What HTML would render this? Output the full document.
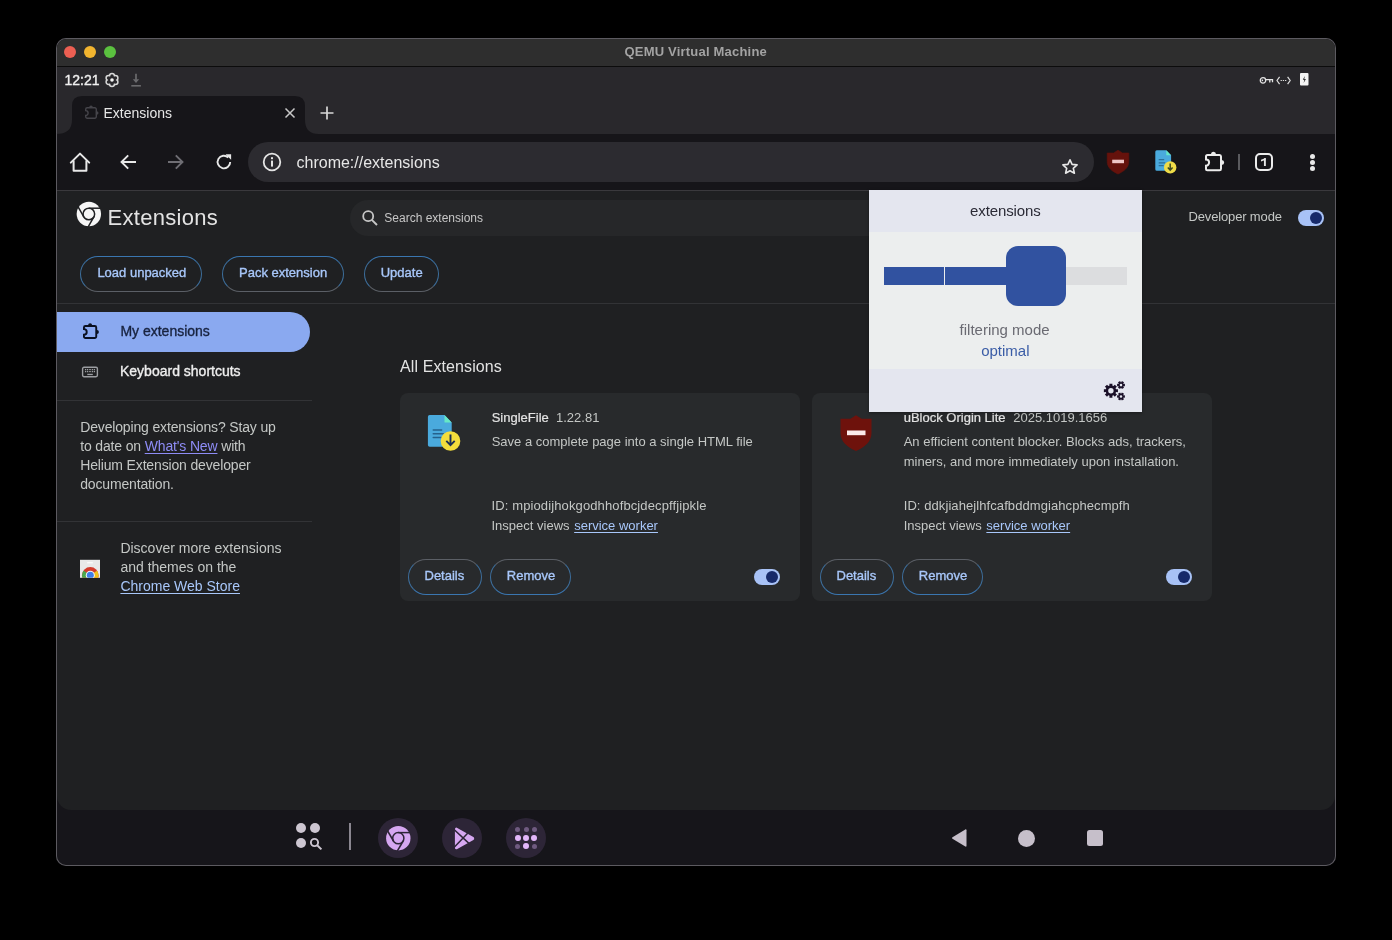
<!DOCTYPE html>
<html><head><meta charset="utf-8"><style>
html,body{margin:0;padding:0;background:#000;width:1392px;height:940px;overflow:hidden;font-family:"Liberation Sans", sans-serif;}
</style></head><body>
<div style="position:absolute;left:0;top:0;width:1392px;height:940px;will-change:transform;">
<div style="position:absolute;left:56px;top:38px;width:1280px;height:828px;background:#16151a;border-radius:10px;box-shadow:0 0 0 1px #5c5a60 inset;"></div>
<div style="position:absolute;left:57px;top:39px;width:1278px;height:27px;background:#2e2e2e;border-radius:9px 9px 0 0;"></div>
<div style="position:absolute;left:57px;top:66px;width:1278px;height:1px;background:#0c0c0c;"></div>
<div style="position:absolute;left:624.5px;top:44.70px;font-size:13px;line-height:13px;color:#a3a3a3;font-weight:700;white-space:nowrap;letter-spacing:0.2px;">QEMU Virtual Machine</div>
<div style="position:absolute;left:64px;top:46px;width:12px;height:12px;background:#ec5f52;border-radius:50%;"></div>
<div style="position:absolute;left:84px;top:46px;width:12px;height:12px;background:#f2b52f;border-radius:50%;"></div>
<div style="position:absolute;left:104px;top:46px;width:12px;height:12px;background:#5bc13f;border-radius:50%;"></div>
<div style="position:absolute;left:57px;top:67px;width:1278px;height:67px;background:#29282c;"></div>
<div style="position:absolute;left:64.5px;top:73.25px;font-size:14px;line-height:14px;color:#f0f0f0;font-weight:400;white-space:nowrap;-webkit-text-stroke:0.35px #f0f0f0;">12:21</div>
<svg style="position:absolute;left:104px;top:72px;" width="16" height="16" viewBox="0 0 16 16"><g stroke="#d8d8d8" stroke-width="3"><circle cx="8" cy="8" r="3.9" fill="#d8d8d8"/><circle cx="8.00" cy="4.00" r="1.7" fill="#d8d8d8"/><circle cx="4.54" cy="6.00" r="1.7" fill="#d8d8d8"/><circle cx="4.54" cy="10.00" r="1.7" fill="#d8d8d8"/><circle cx="8.00" cy="12.00" r="1.7" fill="#d8d8d8"/><circle cx="11.46" cy="10.00" r="1.7" fill="#d8d8d8"/><circle cx="11.46" cy="6.00" r="1.7" fill="#d8d8d8"/></g><circle cx="8" cy="8" r="3.9" fill="#29282c"/><circle cx="8.00" cy="4.00" r="1.7" fill="#29282c"/><circle cx="4.54" cy="6.00" r="1.7" fill="#29282c"/><circle cx="4.54" cy="10.00" r="1.7" fill="#29282c"/><circle cx="8.00" cy="12.00" r="1.7" fill="#29282c"/><circle cx="11.46" cy="10.00" r="1.7" fill="#29282c"/><circle cx="11.46" cy="6.00" r="1.7" fill="#29282c"/><circle cx="8" cy="8" r="1.8" fill="#f4f4f4"/></svg>
<svg style="position:absolute;left:130px;top:72px;" width="12" height="15" viewBox="0 0 12 15"><path d="M6 1.8v6" stroke="#6a6a6d" stroke-width="1.7"/><path d="M2.8 7.2h6.4L6 11z" fill="#6a6a6d"/><path d="M1.3 13.8h9.6" stroke="#6a6a6d" stroke-width="1.6"/></svg>
<svg style="position:absolute;left:1259px;top:76px;" width="15" height="9" viewBox="0 0 15 9"><g fill="none" stroke="#e4e4e4" stroke-width="1.3"><circle cx="4" cy="4.4" r="2.7"/><path d="M6.7 3.6h6.8v2.6M10.8 3.6v2.8"/></g><circle cx="3.4" cy="4.4" r="0.8" fill="#e4e4e4"/></svg>
<svg style="position:absolute;left:1276px;top:76px;" width="16" height="9" viewBox="0 0 16 9"><g fill="none" stroke="#dcdcdc" stroke-width="1.2"><path d="M3.6 0.8L1 4.5l2.6 3.7M11.6 0.8l2.6 3.7-2.6 3.7"/></g><path d="M4.6 4.5h6" stroke="#dcdcdc" stroke-width="1" stroke-dasharray="1.3 0.9"/></svg>
<svg style="position:absolute;left:1300px;top:73px;" width="9" height="13" viewBox="0 0 9 13"><rect x="0" y="0" width="8.5" height="12.5" rx="1" fill="#f4f4f4"/><path d="M4.8 3L2.8 6.8h1.6L3.6 10l2.3-4H4.3z" fill="#222"/></svg>
<svg style="position:absolute;left:56px;top:96px" width="266" height="38" viewBox="0 0 266 38"><path d="M0 38 Q16 38 16 24 L16 10 Q16 0 26 0 L239 0 Q249 0 249 10 L249 24 Q249 38 263 38 Z" fill="#161519"/></svg>
<svg style="position:absolute;left:80.5px;top:103px;" width="20.0" height="20" viewBox="0 0 20.0 20"><path d="M6.20,4.70 H13.80 A1.5,1.5 0 0 1 15.30,6.20 V13.80 A1.5,1.5 0 0 1 13.80,15.30 H6.20 A1.5,1.5 0 0 1 4.70,13.80 V12.40 A2.40,2.40 0 0 0 4.70,7.60 V6.20 A1.5,1.5 0 0 1 6.20,4.70Z" fill="none" stroke="#45444a" stroke-width="1.4"/><path d="M8.20,5.10 L8.20,4.30 A1.80,1.80 0 0 1 11.80,4.30 L11.80,5.10Z" fill="#45444a"/><path d="M14.90,8.20 L15.70,8.20 A1.80,1.80 0 0 1 15.70,11.80 L14.90,11.80Z" fill="#45444a"/></svg>
<div style="position:absolute;left:103.5px;top:106.45px;font-size:14px;line-height:14px;color:#e6e6e6;font-weight:400;white-space:nowrap;">Extensions</div>
<svg style="position:absolute;left:284px;top:107px;" width="12" height="12" viewBox="0 0 12 12"><path d="M1.5 1.5l9 9M10.5 1.5l-9 9" stroke="#c8c8c8" stroke-width="1.5"/></svg>
<svg style="position:absolute;left:320px;top:106px;" width="14" height="14" viewBox="0 0 14 14"><path d="M7 0.5v13M0.5 7h13" stroke="#d8d8d8" stroke-width="1.7"/></svg>
<div style="position:absolute;left:57px;top:134px;width:1278px;height:56px;background:#161519;"></div>
<div style="position:absolute;left:57px;top:190px;width:1278px;height:1px;background:#3a393d;"></div>
<svg style="position:absolute;left:68px;top:150px;" width="24" height="24" viewBox="0 0 24 24"><path d="M2.8 12.6L12 3.6l9.2 9" fill="none" stroke="#e8e8e8" stroke-width="2" stroke-linejoin="round" stroke-linecap="round"/><path d="M5.6 10.6V20.7H18.4V10.6" fill="none" stroke="#e8e8e8" stroke-width="2" stroke-linejoin="round"/></svg>
<svg style="position:absolute;left:119px;top:153px;" width="18" height="18" viewBox="0 0 18 18"><path d="M17 9H2.5M9.2 2.3L2.5 9l6.7 6.7" fill="none" stroke="#e8e8e8" stroke-width="1.9"/></svg>
<svg style="position:absolute;left:167px;top:153px;" width="18" height="18" viewBox="0 0 18 18"><path d="M1 9h14.5M8.8 2.3L15.5 9l-6.7 6.7" fill="none" stroke="#6f6e74" stroke-width="1.9"/></svg>
<svg style="position:absolute;left:214px;top:152px;" width="20" height="20" viewBox="0 0 20 20"><path d="M16.2 10a6.3 6.3 0 1 1-1.9-4.5" fill="none" stroke="#e8e8e8" stroke-width="1.9"/><path d="M11.5 2.2h5.6v5.6z" fill="#e8e8e8"/></svg>
<div style="position:absolute;left:248px;top:142px;width:846px;height:40px;background:#2c2b30;border-radius:20px;"></div>
<svg style="position:absolute;left:262px;top:152px;" width="20" height="20" viewBox="0 0 20 20"><circle cx="10" cy="10" r="8.3" fill="none" stroke="#e4e4e4" stroke-width="1.8"/><rect x="9" y="8.6" width="2" height="6" fill="#e4e4e4"/><rect x="9" y="5.2" width="2" height="2" fill="#e4e4e4"/></svg>
<div style="position:absolute;left:296.5px;top:154.96px;font-size:16px;line-height:16px;color:#e6e6e6;font-weight:400;white-space:nowrap;">chrome://extensions</div>
<svg style="position:absolute;left:1061px;top:158px;" width="18" height="18" viewBox="0 0 18 18"><path d="M9 1.8l2.1 4.6 5 .5-3.8 3.4 1.1 4.9L9 12.7l-4.4 2.5 1.1-4.9L1.9 6.9l5-.5z" fill="none" stroke="#e8e8e8" stroke-width="1.6" stroke-linejoin="round"/></svg>
<svg style="position:absolute;left:1106px;top:149px;" width="24" height="26" viewBox="0 0 24 26"><path d="M12 1.2L16.5 4H22.8v8.5c0 6.2-4.8 9.8-10.8 12.5C6 22.3 1.2 18.7 1.2 12.5V4H7.5z" fill="#65120c" stroke="#65120c" stroke-width="0.6" stroke-linejoin="round"/><rect x="6.2" y="10.7" width="11.8" height="3.5" fill="#efc6c6"/></svg>
<svg style="position:absolute;left:1154px;top:149px;" width="26" height="26" viewBox="0 0 26 26"><path d="M2.8 1.2h9.5l4.8 5V20.3a1.5 1.5 0 0 1-1.5 1.5H2.8a1.5 1.5 0 0 1-1.5-1.5V2.7a1.5 1.5 0 0 1 1.5-1.5z" fill="#4aaadd"/><path d="M12.3 1.2v5h4.8z" fill="#66e8c6"/><g stroke="#2d6f9a" stroke-width="1.2"><path d="M4.7 10.7h5.5M4.7 13.8h6.5M4.7 16.6h5"/></g><circle cx="16.2" cy="18.4" r="6.2" fill="#efdc48"/><path d="M16.2 14.6v6.5M13.8 18.6l2.4 2.6 2.4-2.6" fill="none" stroke="#3c4a22" stroke-width="1.5"/></svg>
<svg style="position:absolute;left:1201px;top:149.8px;" width="25" height="25.19999999999999" viewBox="0 0 25 25.19999999999999"><path d="M6.50,5.00 H18.50 A1.5,1.5 0 0 1 20.00,6.50 V18.70 A1.5,1.5 0 0 1 18.50,20.20 H6.50 A1.5,1.5 0 0 1 5.00,18.70 V15.70 A3.10,3.10 0 0 0 5.00,9.50 V6.50 A1.5,1.5 0 0 1 6.50,5.00Z" fill="none" stroke="#ececec" stroke-width="2"/><path d="M10.00,5.10 L10.00,4.30 A2.50,2.50 0 0 1 15.00,4.30 L15.00,5.10Z" fill="#ececec"/><path d="M19.90,10.10 L20.70,10.10 A2.50,2.50 0 0 1 20.70,15.10 L19.90,15.10Z" fill="#ececec"/></svg>
<div style="position:absolute;left:1238px;top:154px;width:2px;height:16px;background:#5a5a5e;"></div>
<div style="position:absolute;left:1255px;top:153px;width:18px;height:18px;border:2px solid #ececec;border-radius:5px;box-sizing:border-box;"></div>
<svg style="position:absolute;left:1257px;top:154px;" width="14" height="16" viewBox="0 0 14 16"><path d="M7.9 4.2V12" stroke="#e6e6e6" stroke-width="1.9"/><path d="M8.8 3.9L4 5.8v1.6l4.2-1.5z" fill="#e6e6e6"/></svg>
<div style="position:absolute;left:1309.5px;top:153.5px;width:5px;height:5px;background:#e8e8e8;border-radius:50%;"></div>
<div style="position:absolute;left:1309.5px;top:159.5px;width:5px;height:5px;background:#e8e8e8;border-radius:50%;"></div>
<div style="position:absolute;left:1309.5px;top:165.5px;width:5px;height:5px;background:#e8e8e8;border-radius:50%;"></div>
<div style="position:absolute;left:57px;top:191px;width:1278px;height:619px;background:#1f2022;border-radius:0 0 14px 14px;"></div>
<div style="position:absolute;left:57px;top:303px;width:1278px;height:1px;background:#323336;"></div>
<svg style="position:absolute;left:76px;top:201px;" width="26" height="26" viewBox="0 0 26 26"><circle cx="12.85" cy="13" r="12.2" fill="#f6f6f6"/><circle cx="12.85" cy="13" r="5.8" fill="none" stroke="#1f2022" stroke-width="1.5"/><path d="M12.85,7.20L24.58,7.20" stroke="#1f2022" stroke-width="1.5"/><path d="M17.87,15.90L12.01,26.06" stroke="#1f2022" stroke-width="1.5"/><path d="M7.83,15.90L1.96,5.74" stroke="#1f2022" stroke-width="1.5"/></svg>
<div style="position:absolute;left:107.5px;top:206.78px;font-size:22px;line-height:22px;color:#e3e3e3;font-weight:400;white-space:nowrap;letter-spacing:0.3px;">Extensions</div>
<div style="position:absolute;left:350px;top:200px;width:760px;height:36px;background:#262729;border-radius:18px;"></div>
<svg style="position:absolute;left:361px;top:209px;" width="18" height="18" viewBox="0 0 18 18"><circle cx="7.2" cy="7.2" r="5" fill="none" stroke="#c7c7c7" stroke-width="1.8"/><path d="M10.8 10.8l5.2 5.2" stroke="#c7c7c7" stroke-width="1.9"/></svg>
<div style="position:absolute;left:384.3px;top:211.84px;font-size:12px;line-height:12px;color:#c7c7c7;font-weight:400;white-space:nowrap;">Search extensions</div>
<div style="position:absolute;left:1188.5px;top:210.10px;font-size:13px;line-height:13px;color:#c4c7c5;font-weight:400;white-space:nowrap;letter-spacing:-0.15px;">Developer mode</div>
<div style="position:absolute;left:1298px;top:210px;width:26px;height:16px;background:#a8c2f6;border-radius:8px;"></div>
<div style="position:absolute;left:1310px;top:212px;width:12px;height:12px;background:#172a6a;border-radius:50%;"></div>
<div style="position:absolute;left:80px;top:256px;width:122px;height:36px;border:1px solid #3d6e9c;border-top-color:#3a76b0;border-bottom-color:#5b5f66;border-radius:18px;box-sizing:border-box;"></div>
<div style="position:absolute;left:97.4px;top:266.20px;font-size:13px;line-height:13px;color:#a8c7fa;font-weight:400;white-space:nowrap;-webkit-text-stroke:0.35px #a8c7fa;">Load unpacked</div>
<div style="position:absolute;left:222px;top:256px;width:122px;height:36px;border:1px solid #3d6e9c;border-top-color:#3a76b0;border-bottom-color:#5b5f66;border-radius:18px;box-sizing:border-box;"></div>
<div style="position:absolute;left:239px;top:266.20px;font-size:13px;line-height:13px;color:#a8c7fa;font-weight:400;white-space:nowrap;-webkit-text-stroke:0.35px #a8c7fa;">Pack extension</div>
<div style="position:absolute;left:364px;top:256px;width:75px;height:36px;border:1px solid #3d6e9c;border-top-color:#3a76b0;border-bottom-color:#5b5f66;border-radius:18px;box-sizing:border-box;"></div>
<div style="position:absolute;left:380.7px;top:266.20px;font-size:13px;line-height:13px;color:#a8c7fa;font-weight:400;white-space:nowrap;-webkit-text-stroke:0.35px #a8c7fa;">Update</div>
<div style="position:absolute;left:57px;top:312px;width:253px;height:40px;background:#8aa9f0;border-radius:0 20px 20px 0;"></div>
<svg style="position:absolute;left:78.9px;top:321.1px;" width="22.19999999999999" height="21.899999999999977" viewBox="0 0 22.19999999999999 21.899999999999977"><path d="M6.45,4.95 H15.75 A1.5,1.5 0 0 1 17.25,6.45 V15.45 A1.5,1.5 0 0 1 15.75,16.95 H6.45 A1.5,1.5 0 0 1 4.95,15.45 V13.73 A2.78,2.78 0 0 0 4.95,8.17 V6.45 A1.5,1.5 0 0 1 6.45,4.95Z" fill="none" stroke="#0a1020" stroke-width="1.9"/><path d="M9.10,5.10 L9.10,4.30 A2.00,2.00 0 0 1 13.10,4.30 L13.10,5.10Z" fill="#0a1020"/><path d="M17.10,8.95 L17.90,8.95 A2.00,2.00 0 0 1 17.90,12.95 L17.10,12.95Z" fill="#0a1020"/></svg>
<div style="position:absolute;left:120.4px;top:324.05px;font-size:14px;line-height:14px;color:#18233f;font-weight:400;white-space:nowrap;-webkit-text-stroke:0.35px #18233f;">My extensions</div>
<svg style="position:absolute;left:81px;top:366px;" width="18" height="12" viewBox="0 0 18 12"><rect x="1.6" y="1.3" width="14.8" height="9.4" rx="1.4" fill="none" stroke="#9c9ea2" stroke-width="1.4"/><g fill="#9c9ea2"><rect x="3.95" y="2.95" width="1.3" height="1.3"/><rect x="5.95" y="2.95" width="1.3" height="1.3"/><rect x="10.75" y="2.95" width="1.3" height="1.3"/><rect x="12.75" y="2.95" width="1.3" height="1.3"/><rect x="3.95" y="4.95" width="1.3" height="1.3"/><rect x="5.95" y="4.95" width="1.3" height="1.3"/><rect x="10.75" y="4.95" width="1.3" height="1.3"/><rect x="12.75" y="4.95" width="1.3" height="1.3"/><rect x="8.1" y="3.10" width="1.8" height="1"/><rect x="8.1" y="5.10" width="1.8" height="1"/><rect x="6.3" y="7.8" width="5.5" height="1.3"/></g></svg>
<div style="position:absolute;left:120px;top:364.15px;font-size:14px;line-height:14px;color:#eeeeee;font-weight:400;white-space:nowrap;-webkit-text-stroke:0.35px #eeeeee;">Keyboard shortcuts</div>
<div style="position:absolute;left:57px;top:400px;width:255px;height:1px;background:#323336;"></div>
<div style="position:absolute;left:80.2px;top:419.85px;font-size:14px;line-height:14px;color:#c4c7c5;font-weight:400;white-space:nowrap;letter-spacing:-0.15px;">Developing extensions? Stay up</div>
<div style="position:absolute;left:80.2px;top:438.65px;font-size:14px;line-height:14px;color:#c4c7c5;font-weight:400;white-space:nowrap;letter-spacing:-0.15px;">to date on <span style="color:#8e8cf6;text-decoration:underline;text-underline-offset:2px">What&#39;s New</span> with</div>
<div style="position:absolute;left:80.2px;top:457.65px;font-size:14px;line-height:14px;color:#c4c7c5;font-weight:400;white-space:nowrap;letter-spacing:-0.15px;">Helium Extension developer</div>
<div style="position:absolute;left:80.2px;top:476.65px;font-size:14px;line-height:14px;color:#c4c7c5;font-weight:400;white-space:nowrap;letter-spacing:-0.15px;">documentation.</div>
<div style="position:absolute;left:57px;top:521px;width:255px;height:1px;background:#323336;"></div>
<svg style="position:absolute;left:79px;top:559px;" width="22" height="20" viewBox="0 0 22 20"><rect x="1" y="0.8" width="20" height="18" fill="#e9e9e9"/><rect x="8.2" y="3" width="5.6" height="1.4" fill="#fafafa"/><clipPath id="cwsclip"><rect x="1" y="0.8" width="20" height="18"/></clipPath><g clip-path="url(#cwsclip)"><circle cx="11.3" cy="16.3" r="8.3" fill="#d33b2d"/><clipPath id="cwsc2"><circle cx="11.3" cy="16.3" r="8.3"/></clipPath><g clip-path="url(#cwsc2)"><path d="M11.3,16.3 L2.04,9.82 L0.00,16.30 L11.30,27.60 Z" fill="#4aa84e"/><path d="M11.3,16.3 L20.56,9.82 L22.60,16.30 L11.30,27.60 Z" fill="#f1c21b"/></g><circle cx="11.3" cy="16.3" r="4.5" fill="#f4f4f4"/><circle cx="11.3" cy="16.3" r="3.5" fill="#3f7ee8"/></g></svg>
<div style="position:absolute;left:120.4px;top:541.15px;font-size:14px;line-height:14px;color:#c4c7c5;font-weight:400;white-space:nowrap;">Discover more extensions</div>
<div style="position:absolute;left:120.4px;top:560.15px;font-size:14px;line-height:14px;color:#c4c7c5;font-weight:400;white-space:nowrap;">and themes on the</div>
<div style="position:absolute;left:120.4px;top:578.95px;font-size:14px;line-height:14px;color:#c4c7c5;font-weight:400;white-space:nowrap;"><span style="color:#a8c7fa;text-decoration:underline;text-underline-offset:2px">Chrome Web Store</span></div>
<div style="position:absolute;left:400px;top:359.46px;font-size:16px;line-height:16px;color:#e3e3e3;font-weight:400;white-space:nowrap;letter-spacing:0.1px;">All Extensions</div>
<div style="position:absolute;left:400px;top:393px;width:400px;height:208px;background:#282a2c;border-radius:8px;"></div>
<div style="position:absolute;left:408px;top:559px;width:74px;height:36px;border:1px solid #3d6e9c;border-top-color:#5b5f66;border-bottom-color:#3a76b0;border-radius:18px;box-sizing:border-box;"></div>
<div style="position:absolute;left:424.5px;top:569.20px;font-size:13px;line-height:13px;color:#a8c7fa;font-weight:400;white-space:nowrap;-webkit-text-stroke:0.35px #a8c7fa;">Details</div>
<div style="position:absolute;left:490px;top:559px;width:81px;height:36px;border:1px solid #3d6e9c;border-top-color:#5b5f66;border-bottom-color:#3a76b0;border-radius:18px;box-sizing:border-box;"></div>
<div style="position:absolute;left:506.8px;top:569.20px;font-size:13px;line-height:13px;color:#a8c7fa;font-weight:400;white-space:nowrap;-webkit-text-stroke:0.35px #a8c7fa;">Remove</div>
<div style="position:absolute;left:754px;top:569px;width:26px;height:16px;background:#a8c2f6;border-radius:8px;"></div>
<div style="position:absolute;left:766px;top:571px;width:12px;height:12px;background:#172a6a;border-radius:50%;"></div>
<div style="position:absolute;left:812px;top:393px;width:400px;height:208px;background:#282a2c;border-radius:8px;"></div>
<div style="position:absolute;left:820px;top:559px;width:74px;height:36px;border:1px solid #3d6e9c;border-top-color:#5b5f66;border-bottom-color:#3a76b0;border-radius:18px;box-sizing:border-box;"></div>
<div style="position:absolute;left:836.5px;top:569.20px;font-size:13px;line-height:13px;color:#a8c7fa;font-weight:400;white-space:nowrap;-webkit-text-stroke:0.35px #a8c7fa;">Details</div>
<div style="position:absolute;left:902px;top:559px;width:81px;height:36px;border:1px solid #3d6e9c;border-top-color:#5b5f66;border-bottom-color:#3a76b0;border-radius:18px;box-sizing:border-box;"></div>
<div style="position:absolute;left:918.8px;top:569.20px;font-size:13px;line-height:13px;color:#a8c7fa;font-weight:400;white-space:nowrap;-webkit-text-stroke:0.35px #a8c7fa;">Remove</div>
<div style="position:absolute;left:1166px;top:569px;width:26px;height:16px;background:#a8c2f6;border-radius:8px;"></div>
<div style="position:absolute;left:1178px;top:571px;width:12px;height:12px;background:#172a6a;border-radius:50%;"></div>
<svg style="position:absolute;left:426px;top:413px;" width="36" height="40" viewBox="0 0 36 40"><path d="M3.7 2h14.8l7.2 7.5V32a1.8 1.8 0 0 1-1.8 1.8H3.7A1.8 1.8 0 0 1 1.9 32V3.8A1.8 1.8 0 0 1 3.7 2z" fill="#4aaadd"/><path d="M18.5 2v7.5h7.2z" fill="#66e8c6"/><g stroke="#25618c" stroke-width="1.6" stroke-linecap="round"><path d="M7.3 17h8.3M7.3 20.7h10M7.3 24.5h8"/></g><circle cx="24.5" cy="28" r="9.8" fill="#f3dd3c"/><path d="M24.5 21.5v10.5M20.3 27.8l4.2 4.3 4.2-4.3" fill="none" stroke="#1b2f52" stroke-width="1.9"/></svg>
<div style="position:absolute;left:491.7px;top:410.90px;font-size:13px;line-height:13px;color:#e3e3e3;font-weight:400;white-space:nowrap;-webkit-text-stroke:0.2px #e3e3e3;">SingleFile</div>
<div style="position:absolute;left:556px;top:410.90px;font-size:13px;line-height:13px;color:#c4c7c5;font-weight:400;white-space:nowrap;">1.22.81</div>
<div style="position:absolute;left:491.7px;top:434.70px;font-size:13px;line-height:13px;color:#c4c7c5;font-weight:400;white-space:nowrap;">Save a complete page into a single HTML file</div>
<div style="position:absolute;left:491.5px;top:498.80px;font-size:13px;line-height:13px;color:#c4c7c5;font-weight:400;white-space:nowrap;letter-spacing:0.12px;">ID: mpiodijhokgodhhofbcjdecpffjipkle</div>
<div style="position:absolute;left:491.5px;top:518.50px;font-size:13px;line-height:13px;color:#c4c7c5;font-weight:400;white-space:nowrap;">Inspect views <span style="color:#a8c7fa;text-decoration:underline;text-underline-offset:2px;margin-left:1px">service worker</span></div>
<svg style="position:absolute;left:839px;top:414px;" width="34" height="38" viewBox="0 0 34 38"><path d="M17 1.2l5.6 3.6H32.5V19c0 8.5-6.5 14-15.5 18C8 33 1.5 27.5 1.5 19V4.8h9.9z" fill="#6e120c"/><rect x="8" y="16.5" width="18.5" height="4.7" fill="#fbeaea"/></svg>
<div style="position:absolute;left:903.7px;top:410.70px;font-size:13px;line-height:13px;color:#e3e3e3;font-weight:400;white-space:nowrap;-webkit-text-stroke:0.2px #e3e3e3;">uBlock Origin Lite</div>
<div style="position:absolute;left:1013.2px;top:410.70px;font-size:13px;line-height:13px;color:#c4c7c5;font-weight:400;white-space:nowrap;">2025.1019.1656</div>
<div style="position:absolute;left:903.7px;top:434.80px;font-size:13px;line-height:13px;color:#c4c7c5;font-weight:400;white-space:nowrap;">An efficient content blocker. Blocks ads, trackers,</div>
<div style="position:absolute;left:903.7px;top:454.50px;font-size:13px;line-height:13px;color:#c4c7c5;font-weight:400;white-space:nowrap;">miners, and more immediately upon installation.</div>
<div style="position:absolute;left:903.7px;top:498.80px;font-size:13px;line-height:13px;color:#c4c7c5;font-weight:400;white-space:nowrap;letter-spacing:0.08px;">ID: ddkjiahejlhfcafbddmgiahcphecmpfh</div>
<div style="position:absolute;left:903.7px;top:518.70px;font-size:13px;line-height:13px;color:#c4c7c5;font-weight:400;white-space:nowrap;">Inspect views <span style="color:#a8c7fa;text-decoration:underline;text-underline-offset:2px;margin-left:1px">service worker</span></div>
<div style="position:absolute;left:869px;top:190px;width:273px;height:222px;background:#eceeee;box-shadow:0 1px 3px rgba(0,0,0,0.35);"></div>
<div style="position:absolute;left:869px;top:190px;width:273px;height:42px;background:#e4e6ef;"></div>
<div style="position:absolute;left:970px;top:203.20px;font-size:15px;line-height:15px;color:#2b2b36;font-weight:400;white-space:nowrap;letter-spacing:-0.1px;">extensions</div>
<div style="position:absolute;left:884px;top:267px;width:60px;height:18px;background:#3152a0;"></div>
<div style="position:absolute;left:945px;top:267px;width:61px;height:18px;background:#3152a0;"></div>
<div style="position:absolute;left:1066px;top:267px;width:61px;height:18px;background:#dcdddf;"></div>
<div style="position:absolute;left:1006px;top:246px;width:60px;height:60px;background:#3152a0;border-radius:12px;"></div>
<div style="position:absolute;left:959.6px;top:321.80px;font-size:15px;line-height:15px;color:#6a6a72;font-weight:400;white-space:nowrap;">filtering mode</div>
<div style="position:absolute;left:981.2px;top:342.50px;font-size:15px;line-height:15px;color:#3a5ca6;font-weight:400;white-space:nowrap;">optimal</div>
<div style="position:absolute;left:869px;top:369px;width:273px;height:43px;background:#e4e6ef;"></div>
<svg style="position:absolute;left:1098px;top:374px;" width="34" height="32" viewBox="0 0 34 32"><path d="M18.01,15.29 L19.93,15.16 L19.93,18.24 L18.01,18.11 L17.51,19.31 L18.96,20.58 L16.78,22.76 L15.51,21.31 L14.31,21.81 L14.44,23.73 L11.36,23.73 L11.49,21.81 L10.29,21.31 L9.02,22.76 L6.84,20.58 L8.29,19.31 L7.79,18.11 L5.87,18.24 L5.87,15.16 L7.79,15.29 L8.29,14.09 L6.84,12.82 L9.02,10.64 L10.29,12.09 L11.49,11.59 L11.36,9.67 L14.44,9.67 L14.31,11.59 L15.51,12.09 L16.78,10.64 L18.96,12.82 L17.51,14.09Z M15.600000000000001,16.7 A2.7,2.7 0 1 0 10.2,16.7 A2.7,2.7 0 1 0 15.600000000000001,16.7Z" fill="#1a1028" fill-rule="evenodd"/><path d="M25.68,9.99 L26.90,9.83 L26.90,12.37 L25.68,12.21 L25.30,12.87 L26.05,13.84 L23.85,15.11 L23.38,13.98 L22.62,13.98 L22.15,15.11 L19.95,13.84 L20.70,12.87 L20.32,12.21 L19.10,12.37 L19.10,9.83 L20.32,9.99 L20.70,9.33 L19.95,8.36 L22.15,7.09 L22.62,8.22 L23.38,8.22 L23.85,7.09 L26.05,8.36 L25.30,9.33Z M24.3,11.1 A1.3,1.3 0 1 0 21.7,11.1 A1.3,1.3 0 1 0 24.3,11.1Z" fill="#1a1028" fill-rule="evenodd"/><path d="M25.68,21.39 L26.90,21.23 L26.90,23.77 L25.68,23.61 L25.30,24.27 L26.05,25.24 L23.85,26.51 L23.38,25.38 L22.62,25.38 L22.15,26.51 L19.95,25.24 L20.70,24.27 L20.32,23.61 L19.10,23.77 L19.10,21.23 L20.32,21.39 L20.70,20.73 L19.95,19.76 L22.15,18.49 L22.62,19.62 L23.38,19.62 L23.85,18.49 L26.05,19.76 L25.30,20.73Z M24.3,22.5 A1.3,1.3 0 1 0 21.7,22.5 A1.3,1.3 0 1 0 24.3,22.5Z" fill="#1a1028" fill-rule="evenodd"/></svg>
<div style="position:absolute;left:295.6px;top:823.4px;width:10px;height:10px;background:#cdc6d1;border-radius:50%;"></div>
<div style="position:absolute;left:309.9px;top:823.4px;width:10px;height:10px;background:#cdc6d1;border-radius:50%;"></div>
<div style="position:absolute;left:295.6px;top:837.7px;width:10px;height:10px;background:#cdc6d1;border-radius:50%;"></div>
<svg style="position:absolute;left:309px;top:837px;" width="14" height="14" viewBox="0 0 14 14"><circle cx="5.5" cy="5.5" r="3.6" fill="none" stroke="#cdc6d1" stroke-width="1.9"/><path d="M8.2 8.2l4.2 4.2" stroke="#cdc6d1" stroke-width="2"/></svg>
<div style="position:absolute;left:349px;top:823px;width:2px;height:27px;background:#8a8690;"></div>
<div style="position:absolute;left:378px;top:818px;width:40px;height:40px;background:#2d2537;border-radius:50%;"></div>
<div style="position:absolute;left:442px;top:818px;width:40px;height:40px;background:#2d2537;border-radius:50%;"></div>
<div style="position:absolute;left:506px;top:818px;width:40px;height:40px;background:#2d2537;border-radius:50%;"></div>
<svg style="position:absolute;left:386px;top:826px;" width="25" height="25" viewBox="0 0 25 25"><circle cx="12.3" cy="12.2" r="12.2" fill="#d6a7f1"/><circle cx="12.3" cy="12.2" r="5.6" fill="none" stroke="#2d2537" stroke-width="1.5"/><path d="M12.30,6.60L24.14,6.60" stroke="#2d2537" stroke-width="1.5"/><path d="M17.15,15.00L11.23,25.25" stroke="#2d2537" stroke-width="1.5"/><path d="M7.45,15.00L1.53,4.75" stroke="#2d2537" stroke-width="1.5"/></svg>
<svg style="position:absolute;left:450px;top:823px;" width="28" height="30" viewBox="0 0 28 30"><path d="M6.5 6.3L6.5 24.7L22.6 15.5Z" fill="#d6a7f1" stroke="#d6a7f1" stroke-width="3.2" stroke-linejoin="round"/><path d="M3.5 6L19.2 20.6M3.5 25L18.4 9.6" stroke="#2d2537" stroke-width="1.5"/></svg>
<div style="position:absolute;left:515.3px;top:827.3px;width:5.0px;height:5.0px;background:#6f5a80;border-radius:50%;"></div>
<div style="position:absolute;left:514.9px;top:834.9px;width:5.8px;height:5.8px;background:#e2b6fa;border-radius:50%;"></div>
<div style="position:absolute;left:515.3px;top:843.5px;width:5.0px;height:5.0px;background:#6f5a80;border-radius:50%;"></div>
<div style="position:absolute;left:523.7px;top:827.3px;width:5.0px;height:5.0px;background:#6f5a80;border-radius:50%;"></div>
<div style="position:absolute;left:523.3000000000001px;top:834.9px;width:5.8px;height:5.8px;background:#e2b6fa;border-radius:50%;"></div>
<div style="position:absolute;left:523.3000000000001px;top:843.1px;width:5.8px;height:5.8px;background:#e2b6fa;border-radius:50%;"></div>
<div style="position:absolute;left:531.6px;top:827.3px;width:5.0px;height:5.0px;background:#6f5a80;border-radius:50%;"></div>
<div style="position:absolute;left:531.2px;top:834.9px;width:5.8px;height:5.8px;background:#e2b6fa;border-radius:50%;"></div>
<div style="position:absolute;left:531.6px;top:843.5px;width:5.0px;height:5.0px;background:#6f5a80;border-radius:50%;"></div>
<svg style="position:absolute;left:951px;top:829px;" width="17" height="18" viewBox="0 0 17 18"><path d="M15.5 1.2v15.6c0 .8-.6 1-1.2.7L1.5 9.8c-.6-.4-.6-1.2 0-1.6L14.3.5c.6-.3 1.2-.1 1.2.7z" fill="#c6bfca"/></svg>
<div style="position:absolute;left:1018px;top:829.5px;width:17px;height:17px;background:#c6bfca;border-radius:50%;"></div>
<div style="position:absolute;left:1087px;top:830.3px;width:15.5px;height:15.5px;background:#c6bfca;border-radius:2.5px;"></div>
</div>
</body></html>
